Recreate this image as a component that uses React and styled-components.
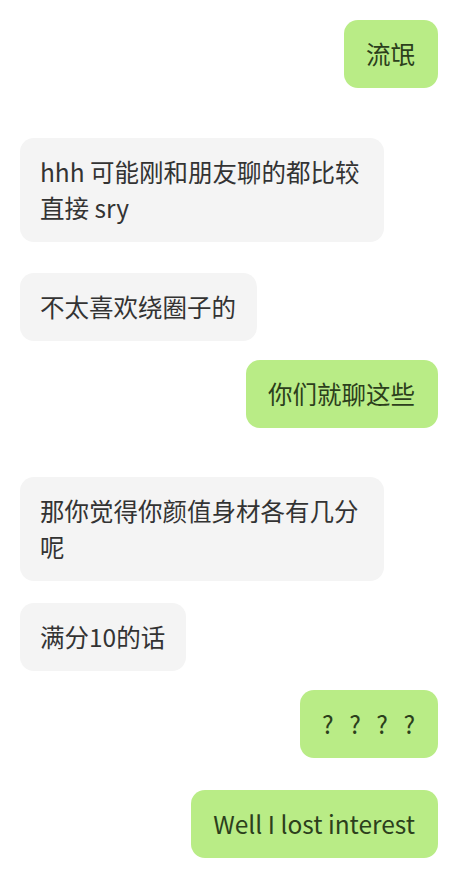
import React from 'react';
import styled, { createGlobalStyle } from 'styled-components';

const GlobalStyle = createGlobalStyle`
  html, body {
    margin: 0;
    padding: 0;
    background: #ffffff;
  }
`;

const Chat = styled.div`
  width: 456px;
  min-height: 870px;
  box-sizing: border-box;
  padding: 20px 18px 0 20px;
  display: flex;
  flex-direction: column;
  font-family: "Noto Sans CJK SC", "Noto Sans", sans-serif;
`;

const Row = styled.div`
  display: flex;
  justify-content: ${props => (props.mine ? 'flex-end' : 'flex-start')};
  margin-top: ${props => props.space || 0}px;
`;

const Bubble = styled.div`
  max-width: 364px;
  box-sizing: border-box;
  padding: ${props => (props.mine ? '16px 23px 16px 22px' : '16px 21px 16px 20px')};
  border-radius: 14px;
  font-size: 24.5px;
  line-height: 36px;
  word-spacing: ${props => (props.wide ? '10px' : 'normal')};
  background-color: ${props => (props.mine ? '#b9ec86' : '#f4f4f4')};
  color: ${props => (props.mine ? '#2c3f1c' : '#333333')};
  word-break: break-all;
`;

const messages = [
  { mine: true, text: '流氓', space: 0 },
  { mine: false, text: 'hhh 可能刚和朋友聊的都比较直接 sry', space: 50 },
  { mine: false, text: '不太喜欢绕圈子的', space: 31 },
  { mine: true, text: '你们就聊这些', space: 19 },
  { mine: false, text: '那你觉得你颜值身材各有几分呢', space: 49 },
  { mine: false, text: '满分10的话', space: 22 },
  { mine: true, text: '? ? ? ?', space: 19, wide: true },
  { mine: true, text: 'Well I lost interest', space: 32 },
];

export default function App() {
  return (
    <>
      <GlobalStyle />
      <Chat>
        {messages.map((m, i) => (
          <Row key={i} mine={m.mine} space={m.space}>
            <Bubble mine={m.mine} wide={m.wide}>{m.text}</Bubble>
          </Row>
        ))}
      </Chat>
    </>
  );
}
